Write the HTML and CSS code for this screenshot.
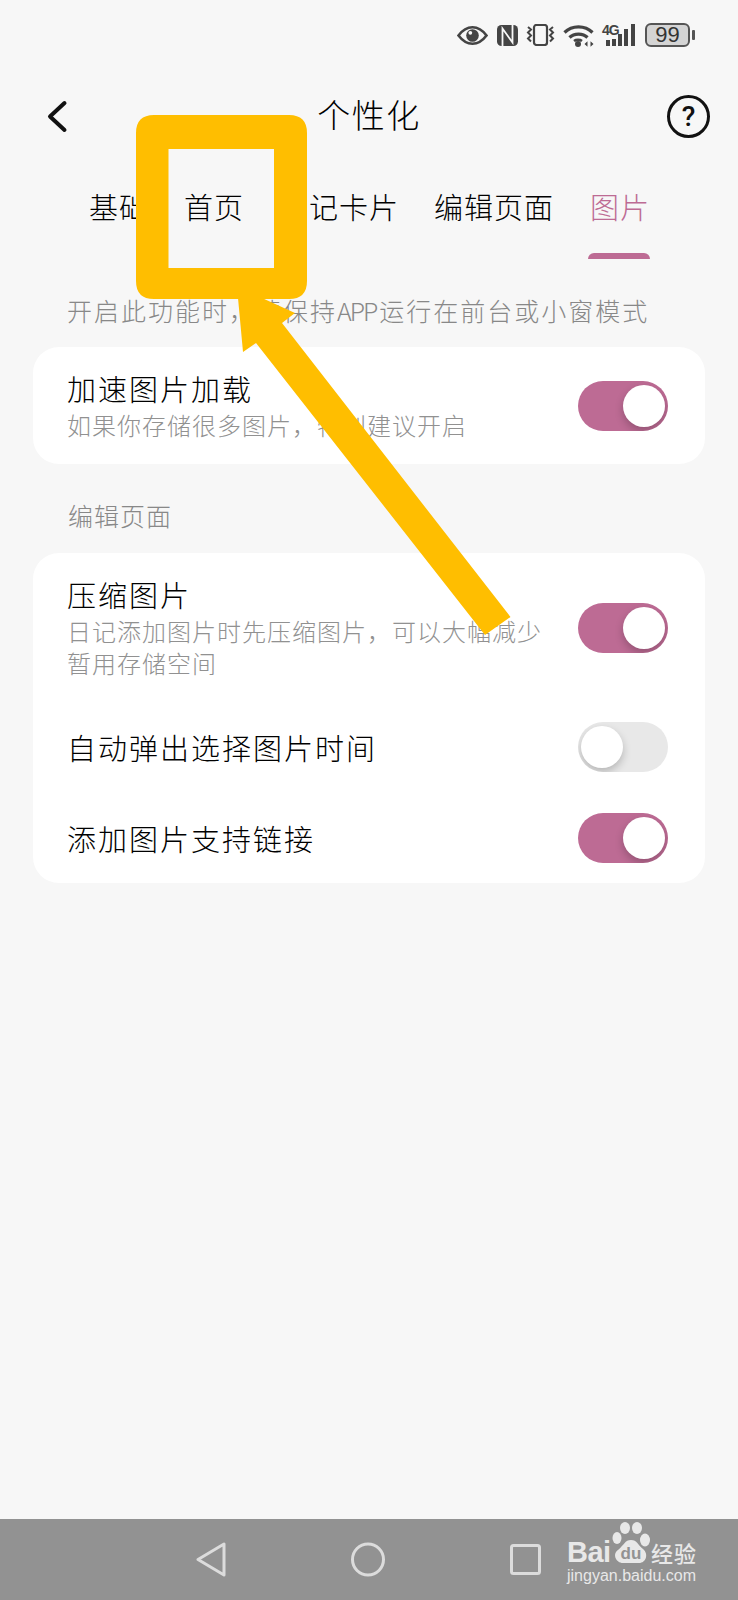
FILE: index.html
```html
<!doctype html>
<html lang="zh-CN">
<head>
    <meta charset="utf-8">
    <title>个性化</title>
    <link rel="stylesheet" href="styles.css">
</head>
<body>
    <div class="screen">
        <div class="status">
            <svg class="eye" width="31" height="19" viewBox="0 0 31 19">
                <path d="M1.500 9.500C6 3.500 10.500 1.300 15.500 1.300S25 3.500 29.500 9.500C25 15.500 20.500 17.700 15.500 17.700S6 15.500 1.500 9.500Z" fill="none" stroke="#444" stroke-width="2.600"/>
                <circle cx="15.500" cy="9.500" r="6.300" fill="#444"/>
                <circle cx="13.300" cy="6.800" r="1.900" fill="#f7f7f7"/>
            </svg>
            <svg class="nfc" width="21" height="21" viewBox="0 0 21 21">
                <rect width="21" height="21" rx="4.500" fill="#444"/>
                <path d="M5.500 21V3.500L15.500 17.500V0" fill="none" stroke="#f7f7f7" stroke-width="1.800"/>
            </svg>
            <svg class="vibrate" width="29" height="22" viewBox="0 0 29 22">
                <rect x="8" y="1" width="13" height="20" rx="2.500" fill="none" stroke="#444" stroke-width="2.200"/>
                <path d="M2 3l3 2.500L2 8.500l3 3L2 14.500l3 3M27 3l-3 2.500L27 8.500l-3 3 3 3-3 3" fill="none" stroke="#444" stroke-width="2"/>
            </svg>
            <svg class="wifi" width="31" height="23" viewBox="0 0 31 23">
                <path d="M1.500 8.500C9 1 22 1 29.500 8.500M6.500 13.500C11 9 20 9 24.500 13.500" fill="none" stroke="#444" stroke-width="3.200"/>
                <path d="M11 17C13 15.500 17 15.500 19 17" fill="none" stroke="#444" stroke-width="2.600"/>
                <circle cx="15" cy="20" r="3" fill="#444"/>
                <path d="M21.500 20l3-2.800v5.600zM30.500 20l-3-2.800v5.600z" fill="#444"/>
            </svg>
            <div class="signal">
                <span class="signal-type">4G</span>
                <svg width="34" height="22" viewBox="0 0 34 22">
                    <rect x="4" y="16" width="4" height="6" fill="#444"/>
                    <rect x="10" y="15" width="4" height="7" fill="#444"/>
                    <rect x="16" y="10" width="4" height="12" fill="#444"/>
                    <rect x="22" y="5" width="4" height="17" fill="#444"/>
                    <rect x="29" y="0" width="4" height="22" fill="#444"/>
                </svg>
            </div>
            <div class="battery">
                <span class="battery-level">99</span>
                <span class="battery-nub"></span>
            </div>
        </div>

        <div class="header">
            <svg class="back" width="22" height="33" viewBox="0 0 22 33">
                <path d="M18.500 3L4 16.500L18.500 30" fill="none" stroke="#111" stroke-width="4" stroke-linecap="round" stroke-linejoin="round"/>
            </svg>
            <div class="title">个性化</div>
            <div class="help">?</div>
        </div>

        <div class="tabs">
            <div class="tab">基础</div>
            <div class="tab">首页</div>
            <div class="tab">日记卡片</div>
            <div class="tab">编辑页面</div>
            <div class="tab active">图片</div>
        </div>

        <div class="hint">开启此功能时，请保持<span class="latin">APP</span>运行在前台或小窗模式</div>

        <div class="card">
            <div class="row first-row">
                <div class="row-text">
                    <div class="row-title">加速图片加载</div>
                    <div class="row-sub">如果你存储很多图片，特别建议开启</div>
                </div>
                <div class="toggle on"><span class="knob"></span></div>
            </div>
        </div>

        <div class="section">编辑页面</div>

        <div class="card">
            <div class="row first-row">
                <div class="row-text">
                    <div class="row-title">压缩图片</div>
                    <div class="row-sub">日记添加图片时先压缩图片，可以大幅减少暂用存储空间</div>
                </div>
                <div class="toggle on"><span class="knob"></span></div>
            </div>
            <div class="row">
                <div class="row-title">自动弹出选择图片时间</div>
                <div class="toggle"><span class="knob"></span></div>
            </div>
            <div class="row">
                <div class="row-title">添加图片支持链接</div>
                <div class="toggle on"><span class="knob"></span></div>
            </div>
        </div>

        <div class="navbar">
            <svg width="30" height="35" viewBox="0 0 30 35">
                <path d="M28 2V33L2 17.500Z" fill="none" stroke="#dcdcdc" stroke-width="3" stroke-linejoin="round"/>
            </svg>
            <svg width="34" height="35" viewBox="0 0 34 35">
                <circle cx="17" cy="17.500" r="15.500" fill="none" stroke="#dcdcdc" stroke-width="3"/>
            </svg>
            <svg width="31" height="31" viewBox="0 0 31 31">
                <rect x="1.500" y="1.500" width="28" height="28" rx="2" fill="none" stroke="#dcdcdc" stroke-width="3"/>
            </svg>
            <div class="watermark">
                <div class="wm-top">
                    <span class="wm-bai">Bai</span>
                    <svg class="wm-paw" width="42" height="42" viewBox="0 0 42 42">
                        <ellipse cx="6" cy="16" rx="4.500" ry="6" fill="#e8e8e8"/>
                        <ellipse cx="14" cy="6" rx="5" ry="6" fill="#e8e8e8"/>
                        <ellipse cx="26" cy="6" rx="5" ry="6" fill="#e8e8e8"/>
                        <ellipse cx="34" cy="18" rx="5" ry="6.500" fill="#e8e8e8"/>
                        <path d="M20 18C26 18 27 23 32 27C38 32 35 41 28 41H12C5 41 1 32 7 28C13 23 14 18 20 18Z" fill="#e8e8e8"/>
                        <text class="wm-du" x="20" y="37" text-anchor="middle">du</text>
                    </svg>
                    <span class="wm-jy">经验</span>
                </div>
                <div class="wm-url">jingyan.baidu.com</div>
            </div>
        </div>

        <!-- yellow annotation drawn over the screenshot -->
        <svg class="annotation" width="738" height="660" viewBox="0 0 738 660">
            <path fill-rule="evenodd" fill="#ffbe00" d="M154 115H289Q307 115 307 133V281Q307 299 289 299H154Q136 299 136 281V133Q136 115 154 115ZM168.500 149V268H274V149Z"/>
            <path fill="#ffbe00" d="M238 298H262L295 313L282 323L510.500 617L485 635L256 343L243 352Z"/>
        </svg>
    </div>
</body>
</html>
```

FILE: styles.css
```css
* {
    box-sizing: border-box;
}
body {
    margin: 0;
    background: #f7f7f7;
    font-family: "Noto Sans CJK SC", "Noto Sans", sans-serif;
    font-weight: 300;
    overflow: hidden;
}
.screen {
    position: relative;
    display: flex;
    flex-direction: column;
    width: 738px;
    height: 1600px;
}
.status {
    display: flex;
    align-items: center;
    justify-content: flex-end;
    height: 70px;
    padding-right: 48px;
}
.eye {
    margin-right: 9px;
}
.nfc {
    margin-right: 8px;
}
.vibrate {
    margin-right: 8px;
}
.wifi {
    margin-right: 8px;
}
.signal {
    position: relative;
    display: flex;
    margin-right: 9px;
}
.signal-type {
    position: absolute;
    top: -1px;
    left: 0;
    font-family: "Liberation Sans", sans-serif;
    font-size: 14px;
    font-weight: 700;
    line-height: 14px;
    letter-spacing: -1px;
    color: #444;
}
.battery {
    position: relative;
    width: 45px;
    height: 24px;
    border: 2px solid #555;
    border-radius: 6px;
    background: #d4d4d4;
    text-align: center;
}
.battery-level {
    display: block;
    font-family: "Liberation Sans", sans-serif;
    font-size: 22px;
    line-height: 20px;
    color: #333;
}
.battery-nub {
    position: absolute;
    top: 5px;
    right: -7px;
    width: 3px;
    height: 10px;
    background: #555;
    border-radius: 1px;
}
.header {
    display: flex;
    align-items: center;
    justify-content: space-between;
    height: 90px;
    padding: 3px 28px 0 46px;
}
.title {
    margin: 0 0 6px 3px;
    font-size: 33px;
    line-height: 40px;
    letter-spacing: 1.5px;
    color: #000;
}
.help {
    width: 43px;
    height: 43px;
    border: 3px solid #111;
    border-radius: 50%;
    font-family: Roboto, sans-serif;
    font-size: 28px;
    font-weight: 500;
    line-height: 37px;
    text-align: center;
    color: #111;
}
.tabs {
    display: flex;
    gap: 35px;
    height: 99px;
    padding-left: 89px;
}
.tab {
    height: 99px;
    padding-top: 26px;
    font-size: 29px;
    line-height: 40px;
    letter-spacing: 1px;
    color: #000;
}
.tab.active {
    position: relative;
    margin-left: 1px;
    color: #bd6b94;
}
.tab.active::after {
    content: "";
    position: absolute;
    left: -2px;
    bottom: 0;
    width: 62px;
    height: 6px;
    background: #bd6b94;
    border-radius: 6px 6px 0 0;
}
.hint {
    height: 88px;
    padding: 35px 0 0 67px;
    font-size: 25px;
    line-height: 32px;
    letter-spacing: 2px;
    color: #888;
    white-space: nowrap;
}
.latin {
    letter-spacing: -2px;
    margin-right: 3px;
}
.card {
    margin: 0 33px;
    background: #fff;
    border-radius: 26px;
}
.row {
    display: flex;
    align-items: center;
    justify-content: space-between;
    min-height: 90.500px;
    padding: 0 37px 0 34px;
}
.first-row {
    padding-top: 23px;
    padding-bottom: 23px;
}
.row-text {
    max-width: 482px;
}
.row-title {
    font-size: 29px;
    line-height: 36px;
    letter-spacing: 2px;
    color: #000;
}
.row-sub {
    margin-top: 3px;
    font-size: 24px;
    line-height: 32px;
    letter-spacing: 1px;
    color: #919191;
}
.section {
    height: 89px;
    padding: 35px 0 0 68px;
    font-size: 25px;
    line-height: 32px;
    letter-spacing: 1px;
    color: #888;
}
.toggle {
    display: flex;
    align-items: center;
    flex-shrink: 0;
    width: 90px;
    height: 50px;
    padding: 0 3px;
    border-radius: 25px;
    background: #e8e8e8;
    overflow: hidden;
}
.toggle.on {
    justify-content: flex-end;
    background: #bd6b94;
}
.knob {
    width: 42px;
    height: 42px;
    border-radius: 50%;
    background: #fff;
    box-shadow: 0 4px 8px rgba(0, 0, 0, 0.22);
}
.navbar {
    position: relative;
    display: flex;
    align-items: center;
    justify-content: space-between;
    margin-top: auto;
    height: 81px;
    padding: 0 197px 0 196px;
    background: #929292;
}
.watermark {
    position: absolute;
    top: 3px;
    left: 567px;
    width: 132px;
    color: #e8e8e8;
}
.wm-top {
    display: flex;
    align-items: flex-end;
    height: 42px;
}
.wm-bai {
    width: 44px;
    margin-bottom: -2px;
    font-family: "Liberation Sans", sans-serif;
    font-size: 29px;
    font-weight: 700;
    line-height: 28px;
    letter-spacing: -0.5px;
}
.wm-du {
    font-family: "Liberation Sans", sans-serif;
    font-size: 17px;
    font-weight: 700;
    fill: #929292;
}
.wm-jy {
    margin: 0 0 -1px -2px;
    font-size: 22px;
    font-weight: 500;
    line-height: 26px;
    letter-spacing: 1px;
    white-space: nowrap;
}
.wm-url {
    margin-top: 1px;
    font-family: "Liberation Sans", sans-serif;
    font-size: 16px;
    line-height: 22px;
    white-space: nowrap;
}
.annotation {
    position: absolute;
    top: 0;
    left: 0;
    pointer-events: none;
}
```
